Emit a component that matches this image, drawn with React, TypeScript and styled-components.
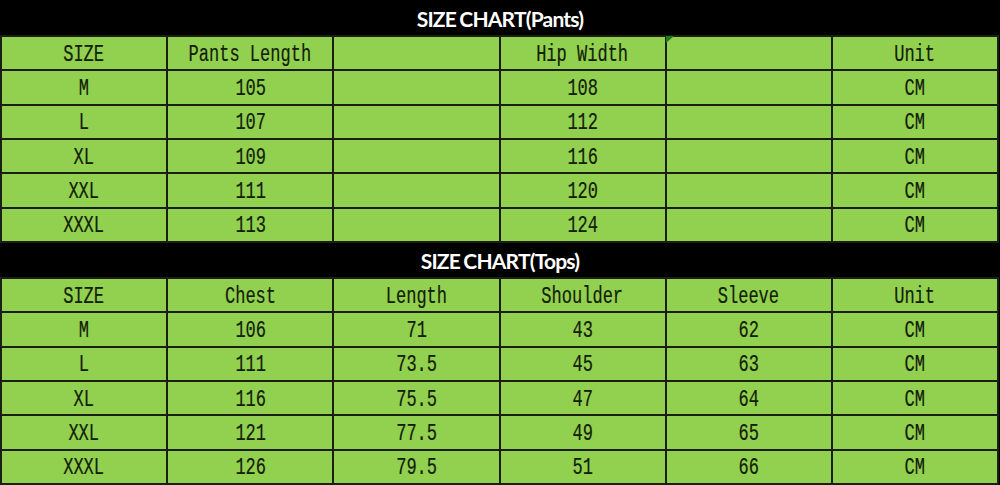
import styled, { createGlobalStyle } from 'styled-components';

const Global = createGlobalStyle`
  html, body {
    margin: 0;
    padding: 0;
    background: #000;
  }
`;

const Page = styled.div`
  width: 1000px;
  height: 485px;
  background: #000;
  display: grid;
  grid-template-rows: 243px 242px;
  overflow: hidden;
`;

const Section = styled.section<{ $titleH: number }>`
  display: grid;
  grid-template-rows: ${(p) => p.$titleH}px 1fr;
`;

const Title = styled.h2`
  margin: 0;
  display: flex;
  align-items: center;
  justify-content: center;
  color: #fff;
  font-family: Lato, 'Open Sans', sans-serif;
  font-weight: 700;
  font-size: 21px;
  letter-spacing: -0.8px;
  word-spacing: -1px;
  padding-top: 1px;
`;

const Table = styled.div`
  position: relative;
  width: 999px;
  box-sizing: border-box;
  display: grid;
  grid-template-columns: repeat(6, 1fr);
  grid-template-rows: repeat(6, 1fr);
  gap: 2px;
  padding: 2px;
  background: #1a1f12;
`;

const Cell = styled.div`
  background: #92d050;
  display: flex;
  align-items: center;
  justify-content: center;
  overflow: hidden;
`;

const Label = styled.span`
  display: inline-block;
  font-family: 'Liberation Mono', 'DejaVu Sans Mono', monospace;
  font-size: 23px;
  color: #122008;
  white-space: pre;
  transform: scaleX(0.74);
  padding-top: 3px;
  -webkit-text-stroke: 0.2px #122008;
`;

// little excel comment marker on the hip width header
const Marker = styled.svg`
  position: absolute;
  left: 666px;
  top: 1px;
`;

type Row = string[];

const pantsHead: Row = ['SIZE', 'Pants Length', '', 'Hip Width', '', 'Unit'];
const pants: Row[] = [
  ['M', '105', '', '108', '', 'CM'],
  ['L', '107', '', '112', '', 'CM'],
  ['XL', '109', '', '116', '', 'CM'],
  ['XXL', '111', '', '120', '', 'CM'],
  ['XXXL', '113', '', '124', '', 'CM'],
];

const topsHead: Row = ['SIZE', 'Chest', 'Length', 'Shoulder', 'Sleeve', 'Unit'];
const tops: Row[] = [
  ['M', '106', '71', '43', '62', 'CM'],
  ['L', '111', '73.5', '45', '63', 'CM'],
  ['XL', '116', '75.5', '47', '64', 'CM'],
  ['XXL', '121', '77.5', '49', '65', 'CM'],
  ['XXXL', '126', '79.5', '51', '66', 'CM'],
];

const Chart = ({
  title,
  titleH,
  rows,
  marker,
}: {
  title: string;
  titleH: number;
  rows: Row[];
  marker?: boolean;
}) => (
  <Section $titleH={titleH}>
    <Title>{title}</Title>
    <Table>
      {rows.flatMap((r, i) =>
        r.map((c, j) => (
          <Cell key={`${i}-${j}`}>
            <Label>{c}</Label>
          </Cell>
        ))
      )}
      {marker && (
        <Marker width="8" height="8" viewBox="0 0 8 8">
          <polygon points="0,0 8,0 0,7" fill="#1f7a1f" />
        </Marker>
      )}
    </Table>
  </Section>
);

export default function App() {
  return (
    <>
      <Global />
      <Page>
        <Chart title="SIZE CHART(Pants)" titleH={35} rows={[pantsHead, ...pants]} marker />
        <Chart title="SIZE CHART(Tops)" titleH={34} rows={[topsHead, ...tops]} />
      </Page>
    </>
  );
}
